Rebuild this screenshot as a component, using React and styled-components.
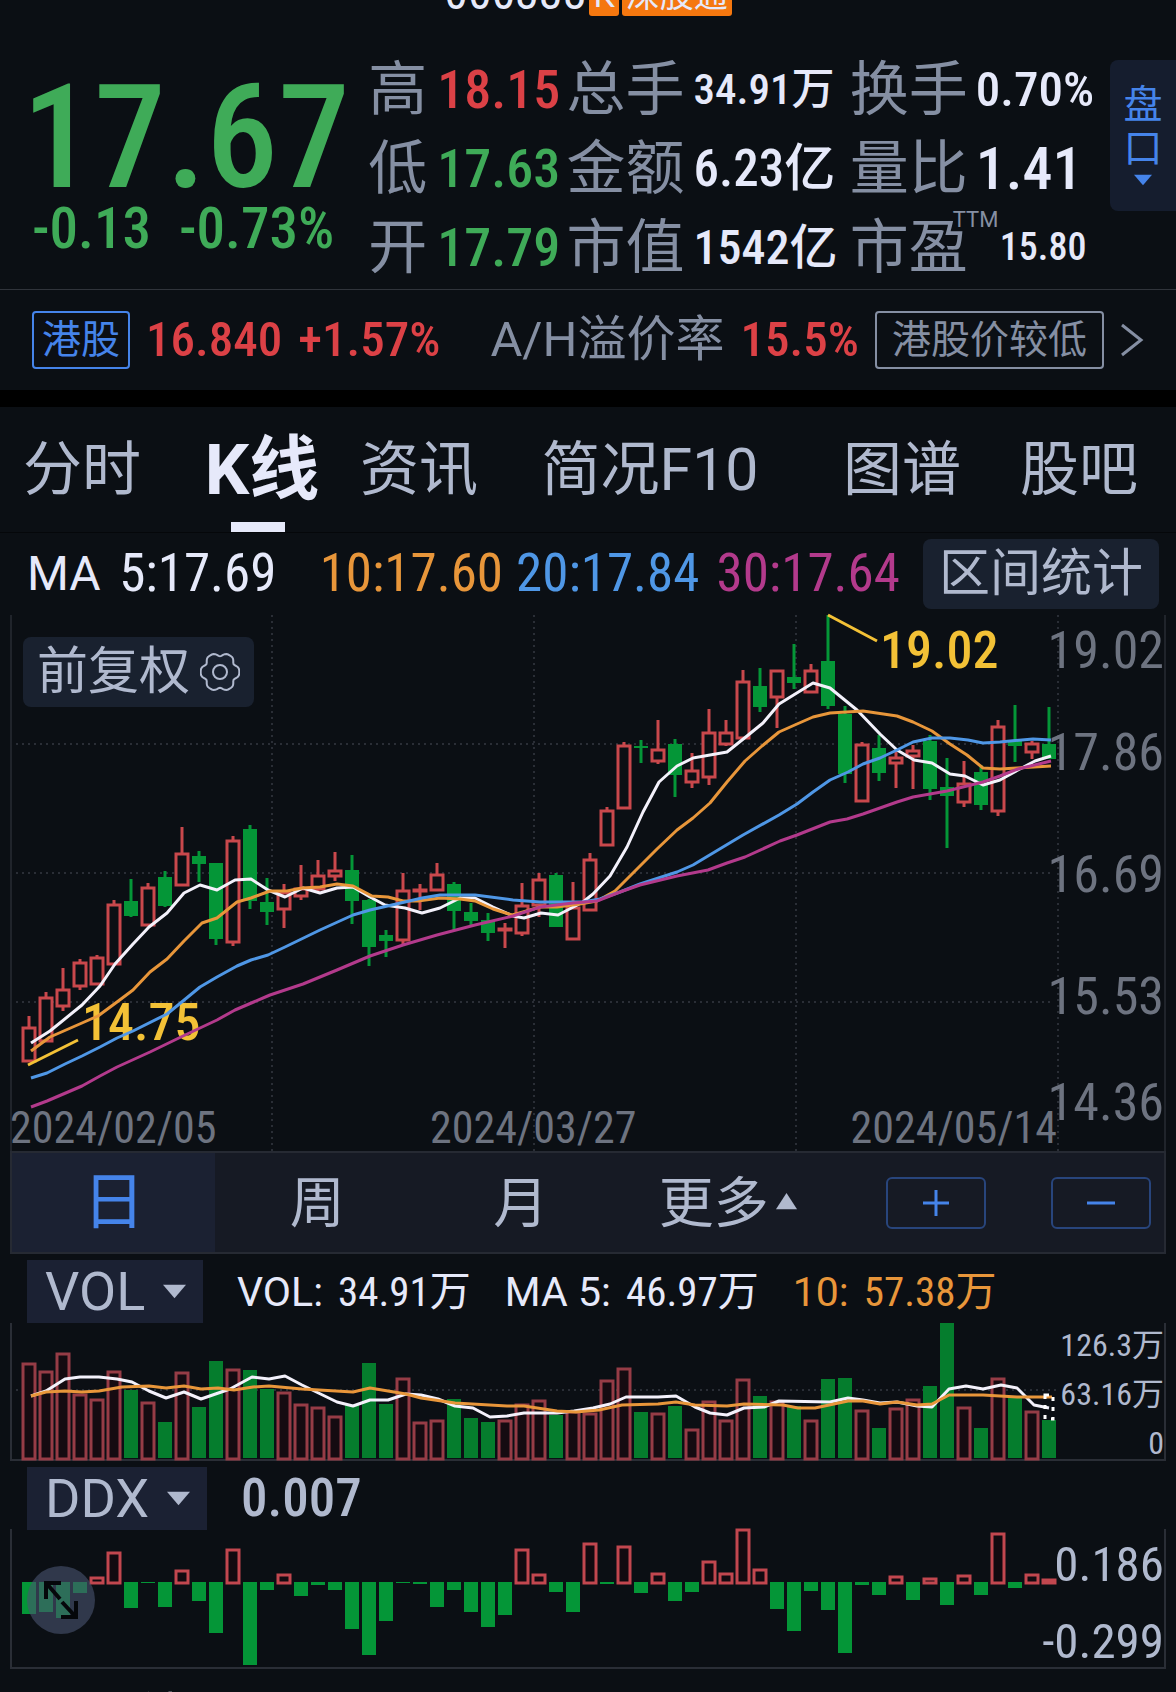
import React, { useState } from "react";
import styled, { createGlobalStyle } from "styled-components";

const GlobalStyle = createGlobalStyle`
  * {
    box-sizing: border-box;
  }
  body {
    margin: 0;
    background: #0b0f14;
    color: #e6e9fa;
    font-family: "Roboto", "Noto Sans CJK SC", sans-serif;
    line-height: 1.2;
  }
  button, select {
    margin: 0;
    padding: 0;
    border: 0;
    background: none;
    color: inherit;
    font: inherit;
    cursor: pointer;
  }
`;

const numberFont = `"Roboto Condensed", "Roboto", "Noto Sans CJK SC", sans-serif`;

const colors = {
  green: "#3fab58",
  red: "#dc4146",
  white: "#e6e9fa",
  label: "#858fa3",
  soft: "#b0b9ce",
  orange: "#e8963a",
  blue: "#4f97e6",
  purple: "#b33a8c",
  gold: "#f3c136",
  axis: "#6d7380",
  grid: "#2a2e36",
  accent: "#4584ea",
};

const quotes = [
  { label: "高", value: "18.15", color: colors.red, size: 54 },
  { label: "总手", value: "34.91万", size: 43 },
  { label: "换手", value: "0.70%", size: 49 },
  { label: "低", value: "17.63", color: colors.green, size: 54 },
  { label: "金额", value: "6.23亿", size: 51 },
  { label: "量比", value: "1.41", size: 60 },
  { label: "开", value: "17.79", color: colors.green, size: 54 },
  { label: "市值", value: "1542亿", size: 48 },
  { label: "市盈", value: "15.80", size: 38, note: "TTM" },
];

const tabs = ["分时", "K线", "资讯", "简况F10", "图谱", "股吧"];

const maLegend = [
  { text: "MA", color: colors.white, wide: true },
  { text: "5:17.69", color: colors.white },
  { text: "10:17.60", color: colors.orange },
  { text: "20:17.84", color: colors.blue },
  { text: "30:17.64", color: colors.purple },
];

// one row per day: [up, high, body top, body bottom, low]
const candles = [
  [1, 1017, 1028, 1063, 1063], [1, 993, 998, 1043, 1043], [1, 969, 990, 1008, 1012],
  [1, 960, 963, 988, 991], [1, 956, 958, 986, 986], [1, 901, 905, 966, 966],
  [0, 880, 902, 917, 918], [1, 884, 888, 927, 927], [0, 872, 878, 907, 908],
  [1, 828, 854, 887, 887], [0, 852, 857, 865, 883], [0, 864, 864, 940, 946],
  [1, 837, 841, 944, 947], [0, 826, 830, 902, 910], [0, 879, 903, 913, 926],
  [1, 885, 893, 911, 929], [1, 866, 889, 898, 901], [1, 861, 876, 891, 893],
  [1, 853, 871, 878, 882], [0, 856, 871, 902, 925], [0, 900, 901, 948, 967],
  [0, 931, 936, 942, 958], [1, 874, 891, 942, 947], [1, 885, 890, 893, 911],
  [1, 864, 875, 892, 892], [0, 883, 885, 912, 931], [0, 904, 913, 922, 928],
  [0, 914, 921, 934, 942], [1, 924, 929, 932, 949], [1, 884, 906, 935, 937],
  [1, 874, 880, 907, 918], [0, 874, 876, 928, 928], [1, 883, 908, 941, 941],
  [1, 854, 860, 912, 912], [1, 808, 811, 847, 847], [1, 743, 746, 810, 810],
  [0, 741, 747, 749, 764], [1, 721, 750, 763, 765], [0, 740, 745, 776, 798],
  [1, 754, 771, 784, 789], [1, 710, 733, 779, 786], [1, 721, 733, 746, 747],
  [1, 671, 682, 740, 740], [0, 669, 687, 708, 713], [1, 671, 671, 699, 729],
  [0, 645, 678, 684, 690], [1, 665, 671, 694, 694], [0, 616, 662, 707, 710],
  [0, 707, 715, 775, 784], [1, 743, 745, 803, 803], [0, 736, 749, 774, 782],
  [1, 752, 758, 765, 789], [1, 746, 751, 758, 790], [0, 736, 742, 790, 801],
  [0, 759, 788, 797, 849], [1, 762, 784, 804, 808], [0, 766, 773, 806, 811],
  [1, 721, 727, 813, 817], [0, 706, 741, 747, 763], [1, 742, 744, 754, 760],
  [0, 708, 745, 760, 760],
];

const volumes = [
  1364, 1372, 1354, 1395, 1400, 1372, 1391, 1403, 1423, 1373, 1408, 1362, 1370, 1371, 1390,
  1393, 1405, 1408, 1417, 1406, 1364, 1405, 1379, 1423, 1421, 1400, 1419, 1423, 1421, 1405,
  1401, 1416, 1412, 1414, 1381, 1369, 1413, 1414, 1407, 1430, 1402, 1421, 1380, 1397, 1402,
  1407, 1421, 1380, 1379, 1411, 1429, 1409, 1400, 1387, 1324, 1408, 1429, 1379, 1399, 1412,
  1421,
];

const ddx = [
  1614, 1612, 1618, 1593, 1577, 1552, 1608, 1583, 1607, 1570, 1601, 1633, 1549, 1665, 1590,
  1574, 1596, 1585, 1590, 1629, 1655, 1621, 1583, 1584, 1607, 1590, 1612, 1627, 1615, 1549,
  1574, 1592, 1612, 1543, 1584, 1546, 1593, 1573, 1601, 1592, 1561, 1573, 1529, 1569, 1609,
  1631, 1591, 1610, 1653, 1585, 1595, 1576, 1600, 1578, 1605, 1575, 1595, 1533, 1588, 1574,
  1579,
];

const maLines = {
  ma30:
    "31,1108 47,1102 82,1087 100,1077 117,1068 150,1053 183,1037 217,1021 235,1011 270,996 303,985 337,971 370,957 403,946 437,936 475,926 513,917 540,908 573,904 597,902 620,893 640,886 677,877 708,871 727,864 745,858 780,842 797,836 830,823 847,820 863,815 897,803 913,798 947,792 967,787 983,783 1000,777 1018,770 1051,762",
  ma20:
    "31,1079 47,1074 65,1065 82,1057 100,1048 117,1039 133,1032 167,1015 183,1002 200,988 217,978 237,967 251,961 268,956 285,948 320,931 353,916 370,911 405,903 422,899 440,896 475,896 513,901 540,903 583,903 600,900 620,893 640,885 677,873 693,866 713,854 743,836 779,816 797,805 813,793 830,781 848,773 863,765 880,759 897,751 913,743 932,739 950,739 968,741 983,744 1000,743 1033,740 1051,741",
  ma10:
    "31,1052 50,1038 82,1024 98,1017 117,1003 133,991 150,973 167,960 184,942 202,924 217,919 237,903 251,899 270,892 287,892 302,889 320,888 337,885 353,887 372,897 388,898 403,902 418,902 440,899 460,900 475,902 493,910 512,916 523,913 540,908 557,908 580,905 597,902 615,892 637,870 657,850 677,831 693,819 710,804 727,783 745,762 762,747 779,733 797,725 813,718 830,714 863,712 897,717 913,723 932,732 950,745 967,756 983,769 1000,770 1017,769 1051,767",
  ma5:
    "31,1044 50,1032 82,1006 100,987 115,965 133,945 149,928 167,914 184,894 200,886 217,891 235,881 251,880 268,891 285,898 303,889 320,894 337,889 353,888 370,898 385,906 405,909 422,914 440,909 460,899 475,899 493,908 513,917 524,919 541,914 558,916 583,903 593,895 610,877 627,848 643,813 659,783 677,767 693,759 727,753 747,737 763,724 779,705 813,684 830,689 857,711 880,735 897,751 914,761 932,764 950,775 965,777 983,786 1000,781 1018,771 1035,762 1051,757",
  vol10:
    "31,1397 46,1393 65,1392 82,1393 99,1392 122,1388 149,1387 166,1389 184,1387 201,1390 218,1389 234,1391 253,1388 269,1387 302,1390 353,1393 370,1389 388,1392 406,1395 421,1399 455,1404 507,1407 524,1407 557,1412 576,1413 599,1411 622,1406 658,1405 676,1403 695,1406 727,1407 744,1405 783,1406 798,1409 815,1409 848,1402 863,1402 880,1405 897,1403 917,1406 932,1405 949,1396 983,1396 1017,1398 1052,1398",
  vol5:
    "31,1397 46,1392 65,1380 80,1378 99,1378 117,1380 132,1383 149,1392 166,1399 184,1393 201,1400 230,1390 252,1378 269,1380 285,1377 302,1386 337,1403 353,1407 370,1401 388,1401 406,1395 421,1396 438,1400 455,1407 473,1409 490,1418 507,1417 524,1414 557,1414 574,1412 593,1409 610,1405 626,1398 658,1398 676,1397 695,1408 710,1414 727,1416 744,1409 764,1408 779,1402 830,1403 848,1399 863,1401 880,1404 897,1403 917,1407 932,1408 949,1390 966,1387 983,1390 1001,1386 1017,1389 1034,1406 1049,1409",
};

const priceLabels = [
  ["19.02", 669],
  ["17.86", 771],
  ["16.69", 893],
  ["15.53", 1015],
  ["14.36", 1121],
];

const dayX = (i) => 29 + 17 * i;

function GearIcon() {
  const points = [];
  for (let a = 0; a < 360; a += 5) {
    const t = (a * Math.PI) / 180;
    const r = 18 + 1.8 * Math.cos(6 * t) - 0.5 * Math.cos(12 * t);
    points.push(`${20 + r * Math.cos(t)},${20 + r * Math.sin(t)}`);
  }
  return (
    <svg width="40" height="40" viewBox="0 0 40 40" fill="none" stroke={colors.soft} strokeWidth="2">
      <polygon points={points.join(" ")} />
      <circle cx="20" cy="20" r="7" />
    </svg>
  );
}

function Triangle({ up, size = 23, color = colors.soft }) {
  return (
    <svg width={size} height={size} viewBox="0 0 24 24" fill={color}>
      <path d={up ? "M1 19 L12 2 L23 19 Z" : "M0 5 H24 L12 19 Z"} />
    </svg>
  );
}

function PriceChart() {
  return (
    <Chart viewBox="0 616 1176 536">
      <g fill="none" stroke={colors.grid} strokeWidth="2">
        <path d="M11 616 V1152 M1165 616 V1152" stroke="#20242b" />
        <path d="M272 616 V1152 M534 616 V1152 M796 616 V1152 M1058 616 V1152" strokeDasharray="2 4" />
        <path d="M16 745 H1050 M16 874 H1050 M16 1003 H1050" strokeDasharray="2 4" />
      </g>
      {candles.map(([up, high, top, bottom, low], i) => {
        const color = up ? "#c9484c" : "#049637";
        const x = dayX(i);
        return (
          <g key={i} stroke={color} strokeWidth="3">
            <path d={`M${x} ${high} V${top} M${x} ${bottom} V${low}`} />
            {up ? (
              <rect x={x - 6} y={top + 1} width="12" height={Math.max(bottom - top - 2, 1)} fill="#0b0f14" />
            ) : (
              <rect x={x - 7} y={top} width="14" height={bottom - top} fill={color} stroke="none" />
            )}
          </g>
        );
      })}
      <path d="M28 1066 L78 1041 M828 616 L877 642" stroke={colors.gold} strokeWidth="3" />
      <ChartText x="82" y="1041" $size={52} $color={colors.gold} $strong>14.75</ChartText>
      <ChartText x="880" y="669" $size={52} $color={colors.gold} $strong>19.02</ChartText>
      <g fill="none" strokeWidth="3" strokeLinejoin="round">
        <polyline points={maLines.ma5} stroke="#f3f1fb" />
        <polyline points={maLines.ma10} stroke={colors.orange} />
        <polyline points={maLines.ma20} stroke={colors.blue} />
        <polyline points={maLines.ma30} stroke={colors.purple} />
      </g>
      {priceLabels.map(([text, y]) => (
        <ChartText key={text} x="1164" y={y} $size={52} $end>{text}</ChartText>
      ))}
      <ChartText x="10" y="1144" $size={44}>2024/02/05</ChartText>
      <ChartText x="430" y="1144" $size={44}>2024/03/27</ChartText>
      <ChartText x="1057" y="1144" $size={44} $end>2024/05/14</ChartText>
    </Chart>
  );
}

function VolumeChart() {
  return (
    <Chart viewBox="0 1324 1176 138">
      <path d="M11 1324 V1461 H1165 V1324" fill="none" stroke={colors.grid} strokeWidth="2" />
      <path d="M16 1391 H1056" stroke={colors.grid} strokeWidth="2" strokeDasharray="2 4" />
      {volumes.map((top, i) =>
        candles[i][0] ? (
          <rect key={i} x={dayX(i) - 6} y={top + 1} width="12" height={1459 - top} fill="#150b11" stroke="#963c46" strokeWidth="3" />
        ) : (
          <rect key={i} x={dayX(i) - 7} y={top} width="14" height={1459 - top} fill="#057d2d" />
        )
      )}
      <g fill="none" strokeWidth="3" strokeLinejoin="round">
        <polyline points={maLines.vol5} stroke="#f3f1fb" />
        <polyline points={maLines.vol10} stroke={colors.orange} />
      </g>
      <rect x="1045" y="1396" width="8" height="24" fill="none" stroke="#ffffff" strokeWidth="3" strokeDasharray="4 6" />
      <ChartText x="1164" y="1357" $size={32} $color={colors.soft} $end>126.3万</ChartText>
      <ChartText x="1164" y="1406" $size={32} $color={colors.soft} $end>63.16万</ChartText>
      <ChartText x="1164" y="1455" $size={32} $color={colors.soft} $end>0</ChartText>
    </Chart>
  );
}

function DdxChart() {
  return (
    <Chart viewBox="0 1531 1176 138">
      <path d="M11 1529 V1668 H1165 V1529" fill="none" stroke={colors.grid} strokeWidth="2" />
      {ddx.map((end, i) =>
        end < 1582 ? (
          <rect key={i} x={dayX(i) - 6} y={end + 1} width="12" height={Math.max(1582 - end, 1)} fill="#120a10" stroke="#c2474f" strokeWidth="3" />
        ) : (
          <rect key={i} x={dayX(i) - 7} y="1582" width="14" height={end - 1582} fill="#049637" />
        )
      )}
      <ChartText x="1164" y="1581" $size={49} $color={colors.soft} $end>0.186</ChartText>
      <ChartText x="1164" y="1658" $size={49} $color={colors.soft} $end>-0.299</ChartText>
    </Chart>
  );
}

function IndicatorSelect({ name, options }) {
  return (
    <Picker>
      <PickerSelect aria-label={name} defaultValue={name}>
        {options.map((o) => (
          <option key={o}>{o}</option>
        ))}
      </PickerSelect>
      <Triangle />
    </Picker>
  );
}

export default function App() {
  const [tab, setTab] = useState("K线");
  const [period, setPeriod] = useState("日");

  return (
    <Page>
      <GlobalStyle />
      <TitleBar>
        <Code>000338</Code>
        <Badge>K</Badge>
        <Badge>深股通</Badge>
      </TitleBar>

      <Quote>
        <Price>
          <strong>17.67</strong>
          <Change>
            <span>-0.13</span>
            <span>-0.73%</span>
          </Change>
        </Price>
        <Stats>
          {quotes.map((q) => (
            <React.Fragment key={q.label}>
              <StatLabel>
                {q.label}
                {q.note && <StatNote>{q.note}</StatNote>}
              </StatLabel>
              <StatValue $size={q.size} $color={q.color} $indent={q.note ? 24 : 0}>
                {q.value}
              </StatValue>
            </React.Fragment>
          ))}
        </Stats>
        <DepthButton>
          <span>盘</span>
          <span>口</span>
          <Triangle size={18} color={colors.accent} />
        </DepthButton>
      </Quote>

      <HkRow href="#hk">
        <HkTag>港股</HkTag>
        <HkNumber>16.840</HkNumber>
        <HkNumber>+1.57%</HkNumber>
        <HkLabel>A/H溢价率</HkLabel>
        <HkNumber>15.5%</HkNumber>
        <HkHint>港股价较低</HkHint>
        <svg width="24" height="34" viewBox="0 0 24 34" fill="none" stroke={colors.label} strokeWidth="3">
          <path d="M2 2 L21 17 L2 32" />
        </svg>
      </HkRow>

      <Tabs>
        {tabs.map((t) => (
          <Tab key={t} $active={t === tab} onClick={() => setTab(t)}>
            {t}
          </Tab>
        ))}
      </Tabs>

      <Legend>
        {maLegend.map((m) => (
          <LegendItem key={m.text} $color={m.color} $wide={m.wide}>
            {m.text}
          </LegendItem>
        ))}
        <ChipButton>区间统计</ChipButton>
      </Legend>

      <Panel>
        <PriceChart />
        <AdjustButton>
          前复权
          <GearIcon />
        </AdjustButton>
      </Panel>

      <PeriodBar>
        {["日", "周", "月"].map((p) => (
          <Period key={p} $active={p === period} onClick={() => setPeriod(p)}>
            {p}
          </Period>
        ))}
        <Period>
          更多
          <Triangle up />
        </Period>
        <ZoomButtons>
          <ZoomButton aria-label="放大">
            <svg width="28" height="28" viewBox="0 0 28 28" stroke={colors.accent} strokeWidth="3">
              <path d="M1 14 H27 M14 1 V27" />
            </svg>
          </ZoomButton>
          <ZoomButton aria-label="缩小">
            <svg width="28" height="28" viewBox="0 0 28 28" stroke={colors.accent} strokeWidth="3">
              <path d="M0 14 H28" />
            </svg>
          </ZoomButton>
        </ZoomButtons>
      </PeriodBar>

      <IndicatorRow>
        <IndicatorSelect name="VOL" options={["VOL", "KDJ", "RSI"]} />
        <VolumeFigure>
          VOL: <b>34.91万</b>
        </VolumeFigure>
        <VolumeFigure>
          MA 5: <b>46.97万</b>
        </VolumeFigure>
        <VolumeFigure $color={colors.orange}>
          10: <b>57.38万</b>
        </VolumeFigure>
      </IndicatorRow>
      <VolumeChart />

      <IndicatorRow>
        <IndicatorSelect name="DDX" options={["DDX", "DDY", "DDZ"]} />
        <DdxValue>0.007</DdxValue>
      </IndicatorRow>
      <Panel>
        <DdxChart />
        <ExpandButton aria-label="全屏">
          <svg width="36" height="42" viewBox="0 0 36 42" fill="none" stroke="#05070a" strokeWidth="4">
            <path d="M3 20 V4 H18 M4 5 L17 20 M18 38 H33 V22 M32 37 L19 23" />
          </svg>
        </ExpandButton>
      </Panel>
      <Footer>业绩</Footer>
    </Page>
  );
}

const Page = styled.main`
  overflow: hidden;
`;

const TitleBar = styled.header`
  height: 16px;
  display: flex;
  justify-content: center;
  align-items: flex-end;
  gap: 3px;
`;

const Code = styled.span`
  font-family: ${numberFont};
  font-size: 48px;
  line-height: 46px;
`;

const Badge = styled.span`
  flex: none;
  padding: 0 4px;
  border-radius: 3px;
  background: #f5770f;
  font-size: 34px;
  line-height: 42px;
`;

const Quote = styled.section`
  display: flex;
  align-items: flex-start;
  padding: 34px 0 2px 22px;
  border-bottom: 1px solid #30343b;
`;

const Price = styled.div`
  width: 30%;
  padding-top: 28px;
  color: ${colors.green};
  font-family: ${numberFont};
  font-weight: 500;
  strong {
    display: block;
    font-size: 144px;
    font-weight: 500;
    line-height: 120px;
  }
`;

const Change = styled.div`
  display: flex;
  gap: 28px;
  padding-left: 10px;
  font-size: 57px;
  line-height: 62px;
`;

const Stats = styled.dl`
  flex: 1;
  margin: 0;
  display: grid;
  grid-template-columns: 69fr 129fr 127fr 156fr 126fr 134fr;
  grid-auto-rows: 79px;
  align-items: center;
`;

const StatLabel = styled.dt`
  position: relative;
  color: ${colors.label};
  font-size: 59px;
  line-height: 79px;
  white-space: nowrap;
`;

const StatNote = styled.small`
  position: absolute;
  top: 0;
  left: 103px;
  font-size: 22px;
  line-height: 24px;
`;

const StatValue = styled.dd`
  margin: 0;
  padding-left: ${(p) => p.$indent}px;
  color: ${(p) => p.$color || colors.white};
  font-family: ${numberFont};
  font-size: ${(p) => p.$size}px;
  font-weight: 500;
  line-height: 79px;
  white-space: nowrap;
`;

const DepthButton = styled.button`
  width: 66px;
  height: 151px;
  margin-top: 10px;
  display: flex;
  flex-direction: column;
  align-items: center;
  justify-content: center;
  border-radius: 8px 0 0 8px;
  background: #151d2e;
  color: ${colors.accent};
  font-size: 39px;
  line-height: 44px;
`;

const HkRow = styled.a`
  display: flex;
  align-items: center;
  height: 100px;
  padding: 0 32px;
  justify-content: space-between;
  text-decoration: none;
`;

const HkTag = styled.span`
  padding: 0 8px;
  border: 2px solid ${colors.accent};
  border-radius: 4px;
  color: ${colors.accent};
  font-size: 39px;
  line-height: 54px;
`;

const HkNumber = styled.span`
  color: ${colors.red};
  font-family: ${numberFont};
  font-size: 49px;
  font-weight: 500;
`;

const HkLabel = styled.span`
  padding-left: 34px;
  color: ${colors.label};
  font-size: 49px;
  line-height: 54px;
`;

const HkHint = styled(HkTag)`
  padding: 0 15px;
  border-color: ${colors.label};
  color: ${colors.label};
`;

const Tabs = styled.nav`
  display: grid;
  grid-template-columns: 164fr 196fr 118fr 344fr 160fr 194fr;
  border-top: 17px solid #000000;
  border-bottom: 1px solid #05070a;
`;

const Tab = styled.button`
  position: relative;
  height: 125px;
  color: ${(p) => (p.$active ? colors.white : colors.soft)};
  font-size: ${(p) => (p.$active ? 70 : 59)}px;
  font-weight: ${(p) => (p.$active ? 700 : 400)};
  line-height: 72px;
  white-space: nowrap;
  &::after {
    content: "";
    display: ${(p) => (p.$active ? "block" : "none")};
    position: absolute;
    bottom: 0;
    left: 50%;
    width: 54px;
    height: 10px;
    margin-left: -31px;
    background: ${colors.white};
  }
`;

const Legend = styled.div`
  display: grid;
  grid-template-columns: 92fr 200fr 196fr 200fr 206fr auto;
  align-items: center;
  padding: 6px 17px 6px 27px;
`;

const LegendItem = styled.span`
  color: ${(p) => p.$color};
  font-family: ${(p) => (p.$wide ? "inherit" : numberFont)};
  font-size: ${(p) => (p.$wide ? 48 : 53)}px;
  white-space: nowrap;
`;

const ChipButton = styled.button`
  height: 70px;
  display: flex;
  align-items: center;
  gap: 10px;
  padding: 0 16px;
  border-radius: 8px;
  background: #19212f;
  color: ${colors.soft};
  font-size: 51px;
  line-height: 70px;
`;

const Panel = styled.div`
  position: relative;
`;

const AdjustButton = styled(ChipButton)`
  position: absolute;
  top: 22px;
  left: 23px;
  padding: 0 14px;
`;

const Chart = styled.svg`
  display: block;
  width: 100%;
  height: auto;
  overflow: visible;
`;

const ChartText = styled.text`
  fill: ${(p) => p.$color || colors.axis};
  font-family: ${numberFont};
  font-size: ${(p) => p.$size}px;
  font-weight: ${(p) => (p.$strong ? 500 : 400)};
  text-anchor: ${(p) => (p.$end ? "end" : "start")};
`;

const PeriodBar = styled.div`
  display: grid;
  grid-template-columns: 204fr 204fr 204fr 212fr 331fr;
  height: 103px;
  margin: 0 10px;
  border: 2px solid #262a33;
  background: #161a24;
`;

const Period = styled.button`
  display: flex;
  align-items: center;
  justify-content: center;
  gap: 6px;
  background: ${(p) => (p.$active ? "#1b2132" : "none")};
  color: ${(p) => (p.$active ? colors.accent : colors.soft)};
  font-size: ${(p) => (p.$active ? 62 : 55)}px;
  line-height: 72px;
`;

const ZoomButtons = styled.div`
  display: flex;
  align-items: center;
  justify-content: flex-end;
  gap: 65px;
  padding-right: 13px;
`;

const ZoomButton = styled.button`
  width: 100px;
  height: 52px;
  display: flex;
  align-items: center;
  justify-content: center;
  border: 2px solid #28457c;
  border-radius: 6px;
`;

const IndicatorRow = styled.div`
  display: flex;
  align-items: center;
  gap: 34px;
  padding: 6px 27px 0;
`;

const Picker = styled.label`
  display: flex;
  align-items: center;
  height: 63px;
  padding-right: 17px;
  background: #1b2133;
  svg {
    margin-left: -23px;
    pointer-events: none;
  }
`;

const PickerSelect = styled.select`
  appearance: none;
  padding: 0 40px 0 18px;
  color: ${colors.soft};
  font-size: 54px;
  line-height: 63px;
  outline: none;
`;

const VolumeFigure = styled.span`
  display: flex;
  gap: 15px;
  color: ${(p) => p.$color || colors.white};
  font-size: 41px;
  line-height: 48px;
  white-space: nowrap;
  b {
    font-family: ${numberFont};
    font-weight: 400;
  }
`;

const DdxValue = styled.span`
  color: ${colors.soft};
  font-family: ${numberFont};
  font-size: 53px;
  font-weight: 500;
`;

const ExpandButton = styled.button`
  position: absolute;
  top: 35px;
  left: 27px;
  width: 68px;
  height: 68px;
  display: flex;
  align-items: center;
  justify-content: center;
  border-radius: 50%;
  background: rgba(74, 84, 112, 0.6);
`;

const Footer = styled.footer`
  height: 23px;
  padding: 18px 87px 0;
  overflow: hidden;
  font-size: 50px;
  line-height: 60px;
`;
